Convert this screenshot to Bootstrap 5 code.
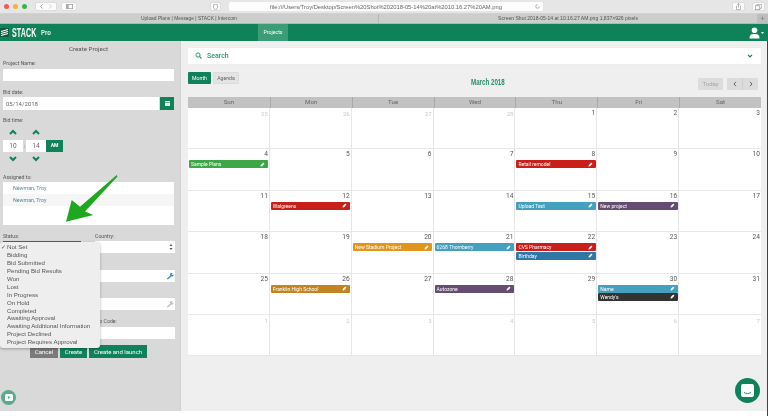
<!DOCTYPE html>
<html lang="en">
<head>
<meta charset="utf-8">
<title>STACK Pro</title>
<link rel="stylesheet" href="https://cdn.jsdelivr.net/npm/bootstrap@5.3.0/dist/css/bootstrap.min.css">
<style>
html,body{height:416px;overflow:hidden;background:#fff}
body{font-family:Roboto,"Liberation Sans",sans-serif;font-size:6px;color:#555}
.shot{position:relative;width:768px;height:416px;filter:blur(.4px);overflow:hidden}
.ch-toolbar{height:14px;background:#e6e6e6;border-bottom:1px solid #d2d2d2}
.dot-l{width:5px;height:5px;border-radius:50%}
.dot-a{background:#f25c54}.dot-b{background:#f5b332}.dot-c{background:#35b84a}
.ch-btn{height:9px;background:#fbfbfb;border-radius:2px;border:1px solid #dcdcdc;display:flex;align-items:center;justify-content:center}
.ch-url{height:9px;width:314px;margin-left:8px;background:#fdfdfd;border-radius:2px;font:5.8px "Liberation Sans",sans-serif;color:#666;position:relative}
.ch-rel{position:absolute;right:3px;top:2px}
.ch-tabs{height:10px;background:#cdcdcd;font:4.9px "Liberation Sans",sans-serif;color:#555;border-bottom:1px solid #b5b5b5}
.ch-tab{flex:1 1 0;text-align:center;line-height:9px}
.ch-tab+.ch-tab{border-left:1px solid #b8b8b8;font-size:5.05px}
.ch-plus{width:11px;background:#bdbdbd;color:#777;text-align:center;line-height:9px;font-size:7px}
.app-nav{height:17px;background:#10825a;padding:0;flex-wrap:nowrap}
.logo-box{width:9px;height:9px;background:#0b5b3f}
.logo-word{display:inline-block;width:25px;white-space:nowrap;transform:scaleX(.57);transform-origin:left center;font:700 12.5px/14px "Liberation Sans",sans-serif;color:#fff;letter-spacing:.2px;margin-left:3px}
.logo-pro{display:inline-block;width:11px;white-space:nowrap;transform:scaleX(.8);transform-origin:left center;font:700 7.5px "Liberation Sans",sans-serif;color:#dff3ea;margin-left:4px}
.app-tab{position:absolute;left:258px;width:30px;height:17px;line-height:17px;background:#3b9c78;color:#fff;font-size:5.2px;text-align:center;text-decoration:none}
.app-body{height:370px;width:767px;flex:none}
.side-pane{width:181px;flex:none;background:#d9d9d9;padding:4px 6px 0 3px;border-right:1px solid #d2d2d2}
.side-title{font-size:6.2px;line-height:8px;text-align:center;color:#555}
.fld-lab{display:block;font-size:5.2px;line-height:6px;margin:0;color:#555}
.m7{margin-top:7px}.m8{margin-top:8px}.m12{margin-top:12px}
.fld-in{height:12px;min-height:0;padding:0 3px;font-size:6px;line-height:12px;border:0;border-radius:0;color:#666;background-color:#fff;box-shadow:none}
.date-row{margin-top:2px;height:13px;gap:1px}
.date-row .fld-in{height:13px;line-height:13px}
.date-btn{width:14px;height:13px;flex:none;padding:0;border:0;border-radius:0;background:#10825a;display:flex;align-items:center;justify-content:center}
.chev-row{gap:10.6px;padding-left:4px;height:6px}
.chev{width:12px;height:6px;display:block}
.chev-top{margin-top:6px}
.time-row{margin-top:5px;margin-bottom:4px;height:12px}
.time-in{width:20px;text-align:center;padding:0;font-size:6.5px}
.time-sep{width:3px;text-align:center;line-height:12px}
.time-am{width:17px;height:12px;padding:0;border:0;border-radius:0;background:#10825a;color:#fff;font-size:5px;font-weight:700}
.assign{margin-top:2px;height:43px;background:#fff;border-radius:0}
.assign .list-group-item{border:0;padding:0 0 0 10px;height:12px;line-height:12px;font-size:5.3px;color:#4a8ea0;background:transparent}
.assign .list-group-item:nth-child(2){background:#f6f6f6}
.form-cols{display:grid;grid-template-columns:78px 80px;column-gap:14px;margin-top:8px}
.f-cell{position:relative}
.f-cell>.fld-lab{margin-bottom:2px}
.gap-a{padding-top:17px}.gap-b{padding-top:16px}
.f-cell>.lab-z{margin-top:8px;margin-bottom:3px}
.stat-sel{height:12px;background:#10825a}
.fld-sel{height:12px;background:#fff;position:relative}
.fld-ico{position:absolute;right:1px;bottom:2px;width:8px;height:8px}
.sel-arr{position:absolute;right:2px;top:2px;width:4px;height:8px}
.act-row{margin-top:6px;gap:2px}
.act-btn{height:13px;padding:0;border:0;border-radius:0;font-size:6px;line-height:13px;color:#fff;background:#10825a}
.act-c{width:28px;background:#7b7b7b}.act-k{width:27px}.act-l{width:58px}
.status-menu{position:absolute;left:0;top:242px;width:100px;height:106px;background:#edeeed;border-radius:3px;box-shadow:0 1px 3px rgba(0,0,0,.3);padding:1px 0 0;margin:0;list-style:none;font:6.1px/7.94px "Liberation Sans",sans-serif;color:#555;z-index:3}
.status-menu li{padding-left:7px;position:relative;white-space:nowrap}
.status-menu .chk{position:absolute;left:1px;top:0}
.arrow-ov{position:absolute;left:60px;top:170px;width:62px;height:58px;z-index:4}
.vid-btn{position:absolute;left:1px;top:390px;width:15px;height:15px;border-radius:50%;background:#58ac8c;z-index:3}
.fab{position:absolute;left:735px;top:378px;width:25px;height:25px;border-radius:50%;background:#10825a;z-index:3}
.main-pane{flex:1 1 auto;min-width:0;background:#efefef;padding:7px 6px 0 7px}
.srch{height:15.5px;background:#fff;border-radius:1px;border:0;padding:0 8px 0 7px;box-shadow:0 0 1px rgba(0,0,0,.1)}
.srch-t{font-size:7px;font-weight:500;color:#2b9470;margin-left:5px}
.cal-bar{height:24.5px;margin-top:8.5px}
.v-btn{height:12px;padding:0;border-radius:1px;font-size:5.2px;line-height:12px;border:0}
.v-on{width:23px;background:#10825a;color:#fff}
.v-off{width:26px;background:#e4e4e4;color:#666;margin-left:2px;border:1px solid #dcdcdc;line-height:10px}
.cal-title{display:inline-block;width:34px;white-space:nowrap;transform:scaleX(.74);transform-origin:left center;font:700 8.4px "Liberation Sans",sans-serif;color:#2b8d6a;margin-left:232px;margin-top:6px;line-height:8px}
.t-btn{width:25px;height:12px;padding:0;border:0;border-radius:1px;background:#dcdcdc;color:#a5a5a5;font-size:6px;line-height:12px;margin-top:6px}
.n-group{margin:6px 3px 0 4px;height:12px}
.n-btn{width:16px;height:12px;padding:0;border:0;background:#dcdcdc;border-radius:1px;display:flex;align-items:center;justify-content:center}
.n-btn+.n-btn{border-left:1px solid #cfcfcf}
.cal-head,.cal-grid{display:grid;grid-template-columns:repeat(7,1fr);width:573px}
.cal-head{height:11.5px;background:#c2c2c2;text-align:center;font-size:6.2px;line-height:11.5px;color:#666}
.cal-head>div+div{border-left:1px solid #a8a8a8}
.cal-grid{grid-template-rows:repeat(6,41.4px);background:#fff}
.day{border-right:1px solid #e6e6e6;border-bottom:1px solid #e8e8e8;padding:0 .5px 0 1px;min-width:0}
.day:nth-child(7n){border-right:0}
.day-n{height:11px;line-height:11px;text-align:right;font-size:6.6px;color:#555;padding-right:.5px}
.day-o .day-n{color:#c9c9c9;font-size:6px}
.evt{height:8px;line-height:8px;margin-bottom:.4px;border-radius:1px;padding:0 2px;color:#fff;font-size:5px;display:flex;justify-content:space-between;align-items:center;white-space:nowrap;overflow:hidden}
.evt svg{width:5px;height:5px;flex:none;margin-right:1px}
.e-gr{background:#3fa648}.e-rd{background:#c91f1a}.e-or{background:#e0951e}.e-bl{background:#43a0bf}
.e-pu{background:#644d70}.e-db{background:#2f78a6}.e-go{background:#c28420}.e-dk{background:#333}
.edge-r{position:absolute;right:0;top:41px;width:1px;height:375px;background:#4a4238}
</style>
</head>
<body>
<svg width="0" height="0" class="d-block position-absolute"><defs>
<symbol id="pn" viewBox="0 0 10 10"><path d="M1 9l.7-3L6.6 1.1l2.3 2.3L4 8.3z" fill="#fff"/></symbol>
<symbol id="wr" viewBox="0 0 10 10"><path d="M1 8.5L5.5 4.5 4.8 3C5.5 1.5 7 1 8.5 1.5L7 3l1 1 1.4-1.3C9.8 4.500 8.500 6 6.800 5.500L2.300 9.500z"/></symbol>
<symbol id="up" viewBox="0 0 12 6"><path d="M3 5l3-3 3 3" fill="none" stroke="#10825a" stroke-width="2"/></symbol>
<symbol id="dn" viewBox="0 0 12 6"><path d="M3 1l3 3 3-3" fill="none" stroke="#10825a" stroke-width="2"/></symbol>
</defs></svg>
<div class="shot">
  <div class="ch-toolbar d-flex align-items-center position-relative">
    <span class="d-flex gap-1 ms-1"><span class="dot-l dot-a"></span><span class="dot-l dot-b"></span><span class="dot-l dot-c"></span></span>
    <span class="ch-btn ms-2" style="width:22px;gap:6px">
      <svg width="3" height="5" viewBox="0 0 3 5"><path d="M2.500.5L.6 2.500l1.900 2" fill="none" stroke="#777" stroke-width=".7"/></svg>
      <svg width="3" height="5" viewBox="0 0 3 5"><path d="M.5.5l1.900 2-1.900 2" fill="none" stroke="#bbb" stroke-width=".7"/></svg>
    </span>
    <span class="ch-btn ms-1" style="width:16px"><svg width="7" height="5" viewBox="0 0 7 5"><rect x=".3" y=".3" width="6.400" height="4.400" fill="none" stroke="#888" stroke-width=".6"/><rect x=".3" y=".3" width="2.400" height="4.400" fill="#aaa"/></svg></span>
    <span class="ch-btn" style="width:11px;margin-left:133px"><svg width="5" height="6" viewBox="0 0 5 6"><path d="M.4.8L2.500.2 4.600.8V3c0 1.400-1 2.300-2.100 2.800C1.400 5.300.4 4.400.4 3z" fill="none" stroke="#888" stroke-width=".6"/></svg></span>
    <span class="ch-url d-flex align-items-center justify-content-center text-nowrap">file:///Users/Troy/Desktop/Screen%20Shot%202018-05-14%20at%2010.16.27%20AM.png
      <svg class="ch-rel" width="5" height="5" viewBox="0 0 5 5"><path d="M4.300 2.500A1.800 1.800 0 1 1 2.500.7" fill="none" stroke="#888" stroke-width=".6"/></svg>
    </span>
    <span class="ch-btn" style="width:13px;margin-left:189px"><svg width="5" height="7" viewBox="0 0 5 7"><path d="M1 3H.4v3.600h4.200V3H4M2.500 4.500V.5M1.300 1.600L2.500.5l1.200 1.100" fill="none" stroke="#888" stroke-width=".6"/></svg></span>
    <span class="ch-btn" style="width:13px;margin-left:7px"><svg width="7" height="6" viewBox="0 0 7 6"><rect x=".3" y="1.800" width="4.500" height="3.900" fill="none" stroke="#888" stroke-width=".6"/><path d="M2 1.500V.3h4.700v4H5" fill="none" stroke="#888" stroke-width=".6"/></svg></span>
  </div>
  <div class="ch-tabs d-flex">
    <div class="ch-tab">Upload Plans | Message | STACK | Intercom</div>
    <div class="ch-tab">Screen Shot 2018-05-14 at 10.16.27 AM.png 1,837×926 pixels</div>
    <div class="ch-plus">+</div>
  </div>
  <nav class="navbar app-nav d-flex align-items-center position-relative">
    <div class="d-flex align-items-center">
      <span class="logo-box d-block"><svg viewBox="0 0 9 9" width="9" height="9" class="d-block"><path d="M1 3.500L8 1.500M1 5.500L8 3.500M1 7.500L8 5.500" stroke="#fff" stroke-width="1.200"/></svg></span>
      <span class="logo-word">STACK</span><span class="logo-pro">Pro</span>
    </div>
    <a class="app-tab" href="#">Projects</a>
    <span class="ms-auto d-flex align-items-center me-1" style="gap:1px">
      <svg width="11" height="12" viewBox="0 0 11 12"><circle cx="5.500" cy="3.200" r="2.800" fill="#fff"/><path d="M.5 11.500c0-4 2-4.500 5-4.500s5 .5 5 4.500z" fill="#fff"/></svg>
      <svg width="3" height="2" viewBox="0 0 3 2"><path d="M0 0h3L1.500 2z" fill="#dff"/></svg>
    </span>
  </nav>
  <div class="app-body d-flex">
    <aside class="side-pane">
      <div class="side-title">Create Project</div>
      <label class="fld-lab m7">Project Name:</label>
      <input class="form-control fld-in" style="margin-top:3px" type="text">
      <label class="fld-lab m8">Bid date:</label>
      <div class="d-flex date-row">
        <input class="form-control fld-in" type="text" value="05/14/2018">
        <button class="btn date-btn" type="button"><svg width="5" height="5" viewBox="0 0 5 5"><rect width="5" height="5" fill="#e8f3ee"/><path d="M0 1.500h5" stroke="#10825a" stroke-width=".6"/></svg></button>
      </div>
      <label class="fld-lab m7">Bid time:</label>
      <div class="d-flex chev-row chev-top"><svg class="chev"><use href="#up"/></svg><svg class="chev"><use href="#up"/></svg></div>
      <div class="d-flex time-row">
        <input class="form-control fld-in time-in" type="text" value="10">
        <span class="time-sep">:</span>
        <input class="form-control fld-in time-in" type="text" value="14">
        <button class="btn time-am" type="button">AM</button>
      </div>
      <div class="d-flex chev-row"><svg class="chev"><use href="#dn"/></svg><svg class="chev"><use href="#dn"/></svg></div>
      <label class="fld-lab m12">Assigned to:</label>
      <ul class="list-group assign">
        <li class="list-group-item">Newman, Troy</li>
        <li class="list-group-item">Newman, Troy</li>
      </ul>
      <div class="form-cols">
        <div class="f-cell"><label class="fld-lab">Status:</label><div class="stat-sel"></div></div>
        <div class="f-cell"><label class="fld-lab">Country:</label><div class="fld-sel"><svg class="sel-arr" viewBox="0 0 4 8"><path d="M.5 3L2 1l1.500 2zM.5 5L2 7l1.500-2z" fill="#555"/></svg></div></div>
        <div class="f-cell"></div>
        <div class="f-cell gap-a"><div class="fld-sel"><svg class="fld-ico" fill="#3a8ab0"><use href="#wr"/></svg></div></div>
        <div class="f-cell"></div>
        <div class="f-cell gap-b"><div class="fld-sel"><svg class="fld-ico" fill="#bcbcbc"><use href="#wr"/></svg></div></div>
        <div class="f-cell"></div>
        <div class="f-cell"><label class="fld-lab lab-z">Zip Code:</label><div class="fld-sel"></div></div>
      </div>
      <div class="d-flex justify-content-center act-row">
        <button class="btn act-btn act-c" type="button">Cancel</button>
        <button class="btn act-btn act-k" type="button">Create</button>
        <button class="btn act-btn act-l" type="button">Create and launch</button>
      </div>
    </aside>
    <main class="main-pane">
      <div class="card srch d-flex flex-row align-items-center">
        <svg width="7" height="7" viewBox="0 0 7 7"><circle cx="3" cy="3" r="2.100" fill="none" stroke="#2b9470" stroke-width="1"/><path d="M4.600 4.600L6.500 6.500" stroke="#2b9470" stroke-width="1.100"/></svg>
        <span class="srch-t">Search</span>
        <svg class="ms-auto" width="6" height="4" viewBox="0 0 6 4"><path d="M1 .8l2 2 2-2" fill="none" stroke="#10825a" stroke-width="1.200"/></svg>
      </div>
      <div class="cal-bar d-flex align-items-start">
        <div class="d-flex">
          <button class="btn v-btn v-on" type="button">Month</button>
          <button class="btn v-btn v-off" type="button">Agenda</button>
        </div>
        <div class="cal-title">March 2018</div>
        <div class="ms-auto d-flex">
          <button class="btn t-btn" type="button">Today</button>
          <div class="btn-group n-group">
            <button class="btn n-btn" type="button"><svg width="4" height="6" viewBox="0 0 4 6"><path d="M3 .8L1 3l2 2.200" fill="none" stroke="#666" stroke-width="1"/></svg></button>
            <button class="btn n-btn" type="button"><svg width="4" height="6" viewBox="0 0 4 6"><path d="M1 .8L3 3 1 5.200" fill="none" stroke="#666" stroke-width="1"/></svg></button>
          </div>
        </div>
      </div>
      <div class="cal-head"><div>Sun</div><div>Mon</div><div>Tue</div><div>Wed</div><div>Thu</div><div>Fri</div><div>Sat</div></div>
      <div class="cal-grid">
        <div class="day day-o"><div class="day-n">25</div></div>
        <div class="day day-o"><div class="day-n">26</div></div>
        <div class="day day-o"><div class="day-n">27</div></div>
        <div class="day day-o"><div class="day-n">28</div></div>
        <div class="day"><div class="day-n">1</div></div>
        <div class="day"><div class="day-n">2</div></div>
        <div class="day"><div class="day-n">3</div></div>

        <div class="day"><div class="day-n">4</div><div class="evt e-gr"><span>Sample Plans</span><svg><use href="#pn"/></svg></div></div>
        <div class="day"><div class="day-n">5</div></div>
        <div class="day"><div class="day-n">6</div></div>
        <div class="day"><div class="day-n">7</div></div>
        <div class="day"><div class="day-n">8</div><div class="evt e-rd"><span>Retail remodel</span><svg><use href="#pn"/></svg></div></div>
        <div class="day"><div class="day-n">9</div></div>
        <div class="day"><div class="day-n">10</div></div>

        <div class="day"><div class="day-n">11</div></div>
        <div class="day"><div class="day-n">12</div><div class="evt e-rd"><span>Walgreens</span><svg><use href="#pn"/></svg></div></div>
        <div class="day"><div class="day-n">13</div></div>
        <div class="day"><div class="day-n">14</div></div>
        <div class="day"><div class="day-n">15</div><div class="evt e-bl"><span>Upload Test</span><svg><use href="#pn"/></svg></div></div>
        <div class="day"><div class="day-n">16</div><div class="evt e-pu"><span>New project</span><svg><use href="#pn"/></svg></div></div>
        <div class="day"><div class="day-n">17</div></div>

        <div class="day"><div class="day-n">18</div></div>
        <div class="day"><div class="day-n">19</div></div>
        <div class="day"><div class="day-n">20</div><div class="evt e-or"><span>New Stadium Project</span><svg><use href="#pn"/></svg></div></div>
        <div class="day"><div class="day-n">21</div><div class="evt e-bl"><span>6268 Thornberry</span><svg><use href="#pn"/></svg></div></div>
        <div class="day"><div class="day-n">22</div><div class="evt e-rd"><span>CVS Pharmacy</span><svg><use href="#pn"/></svg></div><div class="evt e-db"><span>Birthday</span><svg><use href="#pn"/></svg></div></div>
        <div class="day"><div class="day-n">23</div></div>
        <div class="day"><div class="day-n">24</div></div>

        <div class="day"><div class="day-n">25</div></div>
        <div class="day"><div class="day-n">26</div><div class="evt e-go"><span>Franklin High School</span><svg><use href="#pn"/></svg></div></div>
        <div class="day"><div class="day-n">27</div></div>
        <div class="day"><div class="day-n">28</div><div class="evt e-pu"><span>Autozone</span><svg><use href="#pn"/></svg></div></div>
        <div class="day"><div class="day-n">29</div></div>
        <div class="day"><div class="day-n">30</div><div class="evt e-bl"><span>Name</span><svg><use href="#pn"/></svg></div><div class="evt e-dk"><span>Wendy's</span><svg><use href="#pn"/></svg></div></div>
        <div class="day"><div class="day-n">31</div></div>

        <div class="day day-o"><div class="day-n">1</div></div>
        <div class="day day-o"><div class="day-n">2</div></div>
        <div class="day day-o"><div class="day-n">3</div></div>
        <div class="day day-o"><div class="day-n">4</div></div>
        <div class="day day-o"><div class="day-n">5</div></div>
        <div class="day day-o"><div class="day-n">6</div></div>
        <div class="day day-o"><div class="day-n">7</div></div>
      </div>
    </main>
  </div>

  <ul class="status-menu">
    <li><span class="chk">✓</span>Not Set</li>
    <li>Bidding</li>
    <li>Bid Submitted</li>
    <li>Pending Bid Results</li>
    <li>Won</li>
    <li>Lost</li>
    <li>In Progress</li>
    <li>On Hold</li>
    <li>Completed</li>
    <li>Awaiting Approval</li>
    <li>Awaiting Additional Information</li>
    <li>Project Declined</li>
    <li>Project Requires Approval</li>
  </ul>
  <svg class="arrow-ov" viewBox="60 170 62 58"><path d="M116.700 175L117.500 176.500 85 211.500 93.300 215 66 221.700 71.700 200 80 206.700z" fill="#1da81f"/></svg>
  <div class="vid-btn d-flex align-items-center justify-content-center"><svg width="8" height="7" viewBox="0 0 8 7"><rect width="8" height="7" rx="1.500" fill="#fff"/><path d="M3 2l2.500 1.500L3 5z" fill="#58ac8c"/></svg></div>
  <div class="fab d-flex align-items-center justify-content-center"><svg width="13" height="13" viewBox="0 0 13 13"><rect width="13" height="13" rx="2" fill="#fff"/><path d="M3 8.500c2 1.300 5 1.300 7 0" fill="none" stroke="#10825a" stroke-width=".9"/></svg></div>
  <div class="edge-r"></div>
</div>
</body>
</html>
